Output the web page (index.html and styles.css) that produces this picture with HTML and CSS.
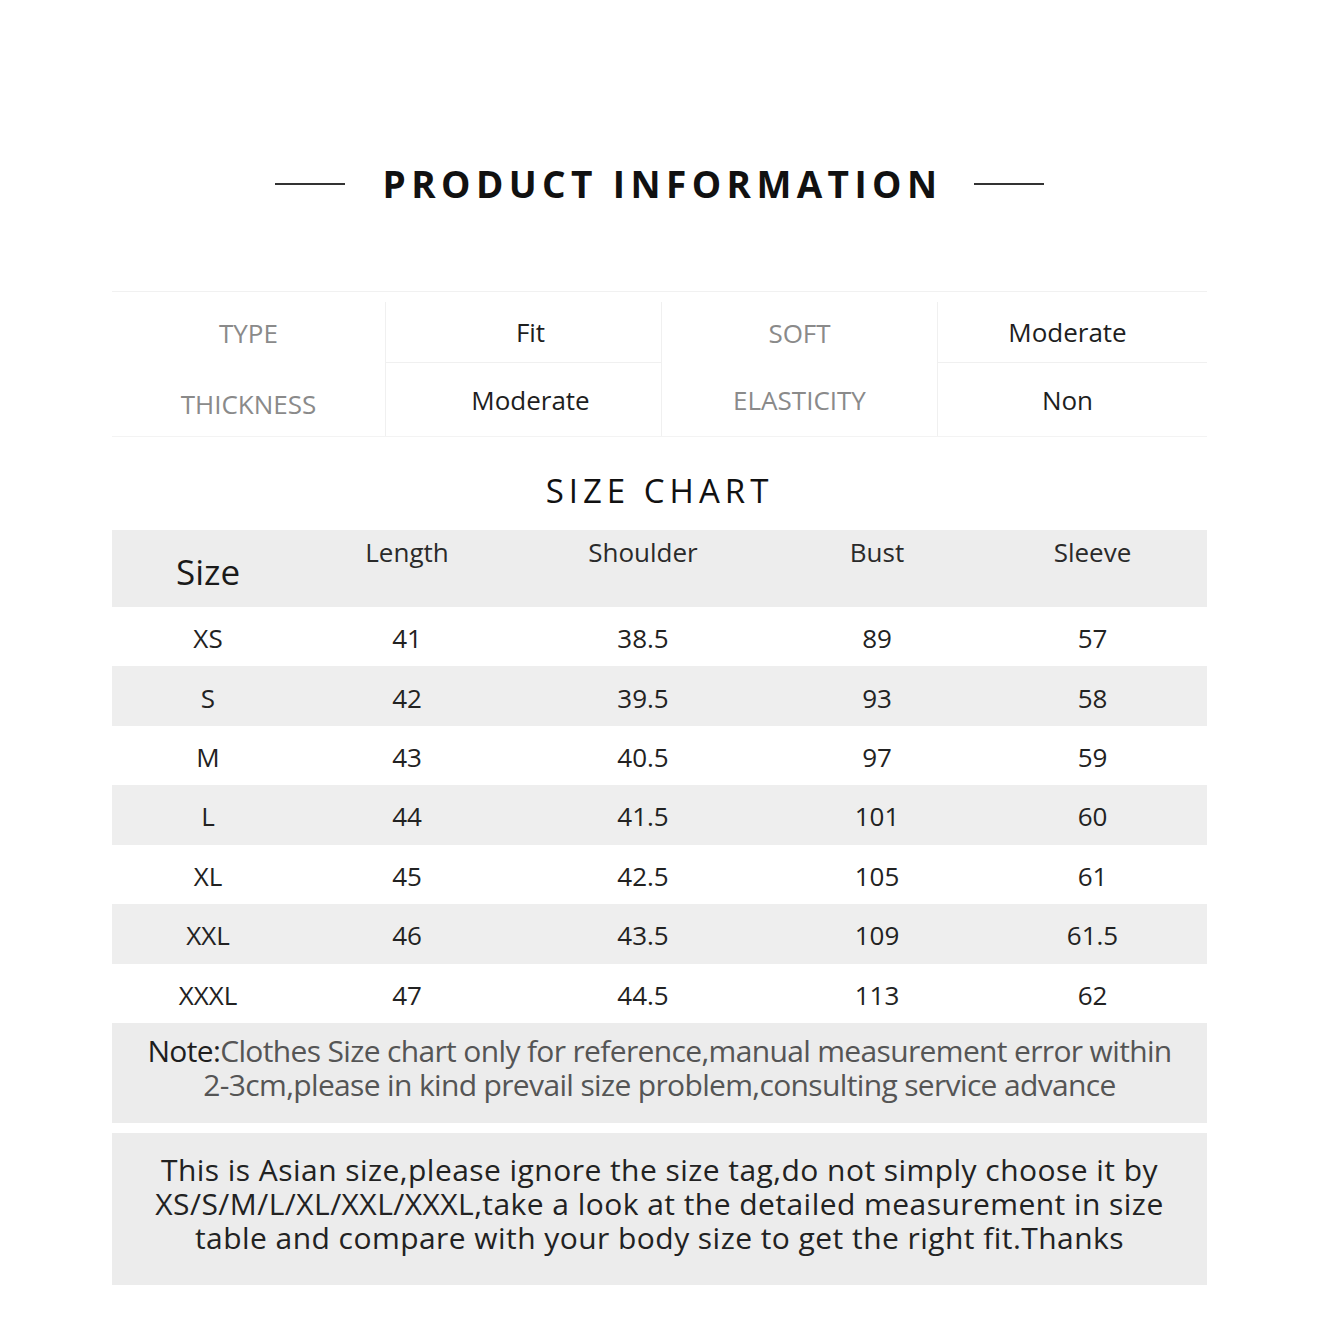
FILE: index.html
```html
<!DOCTYPE html>
<html lang="en">
<head>
<meta charset="utf-8">
<title>Product Information</title>
<link rel="stylesheet" href="styles.css">
</head>
<body>
<main class="page">
  <header class="title-row">
    <span class="rule"></span>
    <h1 class="title">PRODUCT INFORMATION</h1>
    <span class="rule"></span>
  </header>

  <section class="info">
    <div class="info-cell label">TYPE</div>
    <div class="info-cell value col2 sep">Fit</div>
    <div class="info-cell label">SOFT</div>
    <div class="info-cell value col4 sep">Moderate</div>
    <div class="info-cell label low">THICKNESS</div>
    <div class="info-cell value col2">Moderate</div>
    <div class="info-cell label">ELASTICITY</div>
    <div class="info-cell value col4">Non</div>
  </section>

  <h2 class="chart-title">SIZE CHART</h2>

  <section class="chart">
    <div class="chart-head">
      <div class="hcell size-head">Size</div>
      <div class="hcell">Length</div>
      <div class="hcell">Shoulder</div>
      <div class="hcell">Bust</div>
      <div class="hcell">Sleeve</div>
    </div>
    <div class="crow"><span>XS</span><span>41</span><span>38.5</span><span>89</span><span>57</span></div>
    <div class="crow alt"><span>S</span><span>42</span><span>39.5</span><span>93</span><span>58</span></div>
    <div class="crow"><span>M</span><span>43</span><span>40.5</span><span>97</span><span>59</span></div>
    <div class="crow alt"><span>L</span><span>44</span><span>41.5</span><span>101</span><span>60</span></div>
    <div class="crow"><span>XL</span><span>45</span><span>42.5</span><span>105</span><span>61</span></div>
    <div class="crow alt"><span>XXL</span><span>46</span><span>43.5</span><span>109</span><span>61.5</span></div>
    <div class="crow"><span>XXXL</span><span>47</span><span>44.5</span><span>113</span><span>62</span></div>
  </section>

  <section class="note">
    <p><b>Note:</b>Clothes Size chart only for reference,manual measurement error within<br>2-3cm,please in kind prevail size problem,consulting service advance</p>
  </section>

  <section class="asian">
    <p>This is Asian size,please ignore the size tag,do not simply choose it by<br>XS/S/M/L/XL/XXL/XXXL,take a look at the detailed measurement in size<br>table and compare with your body size to get the right fit.Thanks</p>
  </section>
</main>
</body>
</html>
```

FILE: styles.css
```css
* { box-sizing: border-box; }

html, body {
  margin: 0;
  padding: 0;
  background: #ffffff;
}

body {
  font-family: "Open Sans", "Noto Sans", sans-serif;
  color: #222;
}

.page {
  width: 1095px;
  margin: 0 0 0 112px;
}

/* ---------- title ---------- */
.title-row {
  display: flex;
  justify-content: center;
  align-items: flex-start;
  padding-top: 160px;
  height: 291px;
}

.rule {
  display: block;
  width: 70px;
  height: 2px;
  background: #333;
  margin-top: 23px;
}

.title {
  margin: 0 32px 0 38px;
  font-family: "Open Sans", sans-serif;
  font-weight: 700;
  font-size: 37px;
  line-height: 48px;
  letter-spacing: 5.4px;
  color: #111;
}

/* ---------- info table ---------- */
.info {
  display: grid;
  grid-template-columns: 273px 276px 276px 270px;
  grid-template-rows: 61px 73px;
  border-top: 1px solid #f1f1f1;
  border-bottom: 1px solid #f3f3f3;
  padding-top: 10px;
}

.info-cell {
  display: flex;
  align-items: center;
  justify-content: center;
  font-size: 26px;
}

.info-cell:nth-child(4n+2),
.info-cell:nth-child(4n+3),
.info-cell:nth-child(4n+4) {
  border-left: 1px solid #f0f0f0;
}

.label {
  color: #8a8a8a;
  font-weight: 400;
}

.label.low { padding-top: 8px; }

.value {
  color: #1e1e1e;
}

.value.col2 { padding-left: 14px; }
.value.col4 { padding-right: 10px; }

.value.sep {
  border-bottom: 1px solid #f0f0f0;
}

/* ---------- size chart ---------- */
.chart-title {
  margin: 0;
  padding-top: 15px;
  height: 93px;
  line-height: 78px;
  text-align: center;
  font-weight: 500;
  font-size: 33px;
  letter-spacing: 5px;
  color: #111;
}

.chart-head,
.crow {
  display: grid;
  grid-template-columns: 192px 206px 266px 202px 229px;
  text-align: center;
}

.chart-head {
  height: 77px;
  background: #ededed;
}

.hcell {
  font-size: 26px;
  line-height: 30px;
  padding-top: 7px;
  color: #2a2a2a;
}

.hcell.size-head {
  font-size: 35px;
  line-height: 40px;
  padding-top: 22px;
  color: #1a1a1a;
}

.crow {
  height: 59.43px;
  align-items: center;
  font-size: 26px;
  color: #222;
  padding-top: 3px;
}

.crow.alt {
  background: #eeeeee;
}

/* ---------- notes ---------- */
.note,
.asian {
  background: #ececec;
  text-align: center;
  display: flex;
  align-items: center;
  justify-content: center;
}

.note {
  height: 100px;
  padding-bottom: 10px;
}

.asian {
  margin-top: 10px;
  height: 152px;
  padding-bottom: 10px;
}

.note p,
.asian p {
  margin: 0;
  font-size: 30px;
  line-height: 34px;
}

.note p {
  color: #555;
  letter-spacing: -0.65px;
}

.note b {
  font-weight: 400;
  color: #1e1e1e;
}

.asian p {
  color: #222;
  letter-spacing: 0.45px;
}
```
